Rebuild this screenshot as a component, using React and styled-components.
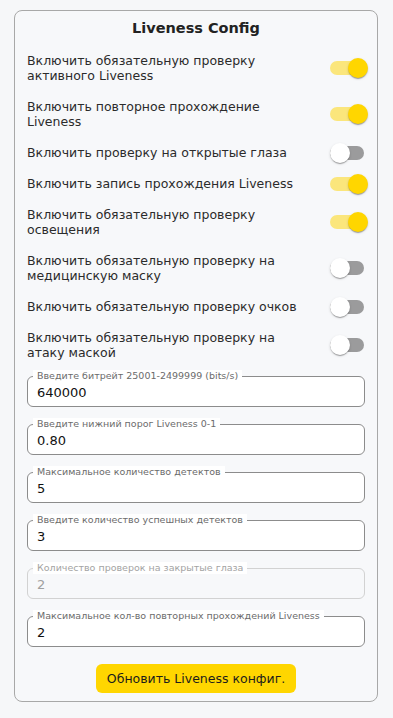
import styled, { createGlobalStyle } from "styled-components";

const GlobalStyle = createGlobalStyle`
  body {
    margin: 0;
    background: #f6f7f9;
    font-family: "DejaVu Sans", "Noto Sans", sans-serif;
    color: #2b2b2b;
  }
`;

const Page = styled.div`
  padding: 10px 15px 16px 14px;
`;

const Card = styled.div`
  border: 1px solid #a8a8a8;
  border-radius: 8px;
  background: #f7f8fa;
  padding: 8px 12px 8px 12px;
  display: flex;
  flex-direction: column;
`;

const Title = styled.h2`
  margin: 0 0 16px;
  font-size: 14.5px;
  line-height: 18px;
  font-weight: 700;
  text-align: center;
  color: #222;
`;

const Rows = styled.div`
  display: flex;
  flex-direction: column;
  gap: 16px;
`;

const Row = styled.div`
  display: flex;
  align-items: center;
  justify-content: space-between;
`;

const RowLabel = styled.span`
  font-size: 12.5px;
  line-height: 15px;
  white-space: pre;
  color: #2b2b2b;
`;

const SwitchRoot = styled.span`
  position: relative;
  flex-shrink: 0;
  width: 38px;
  height: 14px;
  margin-right: -3px;
`;

const Track = styled.span`
  display: block;
  width: 34px;
  height: 14px;
  border-radius: 7px;
  background: ${(p) => (p.$on ? "#fbe67c" : "#9b9b9c")};
`;

const Thumb = styled.span`
  position: absolute;
  top: -3px;
  left: ${(p) => (p.$on ? "18px" : "0")};
  width: 20px;
  height: 20px;
  border-radius: 50%;
  background: ${(p) => (p.$on ? "#ffd600" : "#ffffff")};
  box-shadow: 0 2px 1px -1px rgba(0, 0, 0, 0.2), 0 1px 1px rgba(0, 0, 0, 0.14),
    0 1px 3px rgba(0, 0, 0, 0.12);
`;

const Fields = styled.div`
  display: flex;
  flex-direction: column;
  gap: 17px;
  margin-top: 16px;
`;

const Field = styled.div`
  position: relative;
  height: 31px;
  border: 1px solid ${(p) => (p.$disabled ? "#d2d2d2" : "#8c8c8c")};
  border-radius: 6px;
  background: ${(p) => (p.$disabled ? "transparent" : "#ffffff")};
  box-sizing: border-box;
`;

const FieldLabel = styled.span`
  position: absolute;
  top: -7px;
  left: 5px;
  padding: 0 4px;
  background: #ffffff;
  font-size: 9.5px;
  line-height: 12px;
  color: ${(p) => (p.$disabled ? "#a3a3a3" : "#6b6b6b")};
  white-space: nowrap;
`;

const Input = styled.input`
  width: 100%;
  height: 100%;
  box-sizing: border-box;
  border: none;
  outline: none;
  background: transparent;
  padding: 2px 9px 0;
  font-family: inherit;
  font-size: 13px;
  color: #111;

  &:disabled {
    color: #a0a0a0;
  }
`;

const Button = styled.button`
  align-self: center;
  margin-top: 17px;
  height: 29px;
  width: 200px;
  border: none;
  border-radius: 6px;
  background: #ffd600;
  font-family: inherit;
  font-size: 12.5px;
  color: #1c1c1c;
  cursor: pointer;
`;

const toggles = [
  { label: "Включить обязательную проверку\nактивного Liveness", on: true },
  { label: "Включить повторное прохождение\nLiveness", on: true },
  { label: "Включить проверку на открытые глаза", on: false },
  { label: "Включить запись прохождения Liveness", on: true },
  { label: "Включить обязательную проверку\nосвещения", on: true },
  { label: "Включить обязательную проверку на\nмедицинскую маску", on: false },
  { label: "Включить обязательную проверку очков", on: false },
  { label: "Включить обязательную проверку на\nатаку маской", on: false },
];

const fields = [
  { label: "Введите битрейт 25001-2499999 (bits/s)", value: "640000" },
  { label: "Введите нижний порог Liveness 0-1", value: "0.80" },
  { label: "Максимальное количество детектов", value: "5" },
  { label: "Введите количество успешных детектов", value: "3" },
  { label: "Количество проверок на закрытые глаза", value: "2", disabled: true },
  { label: "Максимальное кол-во повторных прохождений Liveness", value: "2" },
];

function Switch({ on }) {
  return (
    <SwitchRoot>
      <Track $on={on} />
      <Thumb $on={on} />
    </SwitchRoot>
  );
}

export default function App() {
  return (
    <Page>
      <GlobalStyle />
      <Card>
        <Title>Liveness Config</Title>
        <Rows>
          {toggles.map((t) => (
            <Row key={t.label}>
              <RowLabel>{t.label}</RowLabel>
              <Switch on={t.on} />
            </Row>
          ))}
        </Rows>
        <Fields>
          {fields.map((f) => (
            <Field key={f.label} $disabled={f.disabled}>
              <FieldLabel $disabled={f.disabled}>{f.label}</FieldLabel>
              <Input defaultValue={f.value} disabled={f.disabled} />
            </Field>
          ))}
        </Fields>
        <Button>Обновить Liveness конфиг.</Button>
      </Card>
    </Page>
  );
}
